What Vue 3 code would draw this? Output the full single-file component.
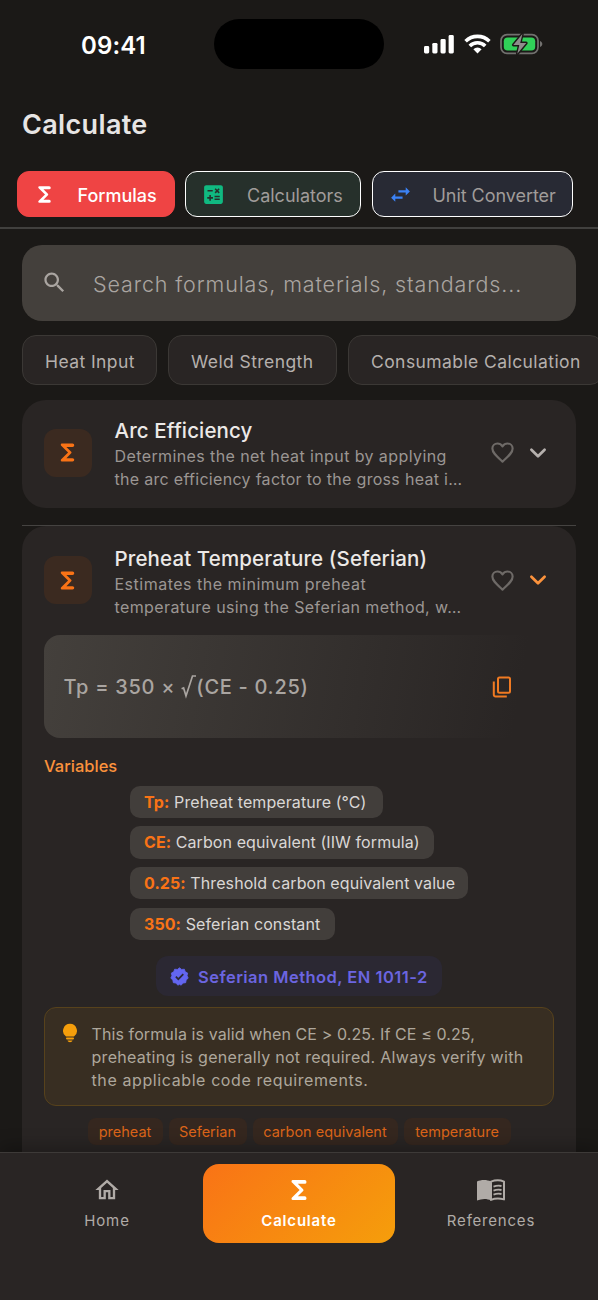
<template>
  <div class="screen">
    <!-- Status bar -->
    <div class="status-bar">
      <span class="clock">09:41</span>
      <div class="island"></div>
      <div class="status-icons">
        <svg width="31" height="20" viewBox="0 0 31 20" fill="#fff">
          <rect x="0" y="12" width="5.2" height="7.4" rx="1.4" />
          <rect x="8.3" y="8.9" width="5.2" height="10.5" rx="1.4" />
          <rect x="16.5" y="5" width="5.2" height="14.4" rx="1.4" />
          <rect x="24.6" y="1" width="5.2" height="18.4" rx="1.4" />
        </svg>
        <svg class="wifi" width="27" height="20" viewBox="0 0 27 20" fill="none" stroke="#fff" stroke-width="3.6">
          <path d="M1.6 7.2a17 17 0 0 1 23.8 0" />
          <path d="M5.8 12a10.8 10.8 0 0 1 15.4 0" />
          <path d="M13.5 19.4l-4.100-4.200a5.900 5.900 0 0 1 8.200 0z" fill="#fff" stroke="none" />
        </svg>
        <svg class="battery" width="43" height="24" viewBox="0 0 43 24">
          <rect x="1" y="2.7" width="37" height="18.600" rx="6" fill="none" stroke="#72716f" stroke-width="1.7" />
          <rect x="3.8" y="5.5" width="31.400" height="13" rx="3.8" fill="#30d158" />
          <path d="M40 9v6c1.4-.5 2.3-1.6 2.3-3s-.9-2.5-2.3-3z" fill="#72716f" />
          <path d="M22.400 2L13.300 13h6l-2 8.800L26.300 11h-6.100z" fill="#8f8d8c" stroke="#1c1917" stroke-width="2.8" paint-order="stroke" stroke-linejoin="round" />
        </svg>
      </div>
    </div>

    <h1 class="page-title">Calculate</h1>

    <!-- Section tabs -->
    <div class="tabs">
      <button v-for="tab in tabs" :key="tab.id" :class="['tab', 'tab-' + tab.id]">
        <svg class="tab-icon" viewBox="0 0 24 24" fill="currentColor"><path :d="icons[tab.icon]" /></svg>
        <span>{{ tab.label }}</span>
      </button>
    </div>

    <main class="content">
      <div class="search-box">
        <svg viewBox="0 0 24 24" width="27" height="27" fill="currentColor"><path :d="icons.search" /></svg>
        <span>Search formulas, materials, standards...</span>
      </div>

      <div class="filters">
        <button v-for="f in filters" :key="f.id" :class="['filter', f.id]">{{ f.label }}</button>
      </div>

      <!-- Formula cards -->
      <template v-for="item in formulas" :key="item.id">
        <div v-if="item.open" class="separator"></div>
        <section :class="['card', { open: item.open }]">
          <div class="card-header">
            <div class="card-icon">
              <svg viewBox="0 0 24 24" width="27" height="27" fill="currentColor"><path :d="icons.sigma" /></svg>
            </div>
            <div class="card-text">
              <h2>{{ item.title }}</h2>
              <p v-for="(line, i) in item.lines" :key="i" :class="item.id + '-' + i">{{ line }}</p>
            </div>
            <svg class="heart" viewBox="0 0 24 24" width="27" height="27" fill="none" stroke="currentColor" stroke-width="1.9" stroke-linejoin="round">
              <path d="M12 20.1l-1.3-1.2C6 14.7 3 12 3 8.5A4.5 4.5 0 0 1 7.5 4c1.8 0 3.4.9 4.5 2.5C13.1 4.9 14.7 4 16.5 4A4.5 4.5 0 0 1 21 8.5c0 3.5-3 6.2-7.7 10.4z" />
            </svg>
            <svg class="chevron" viewBox="0 0 18 12" width="18" height="12" fill="none" stroke="currentColor" stroke-width="2.7" stroke-linecap="round" stroke-linejoin="round">
              <path d="M2.4 2.7L9 9.300l6.600-6.600" />
            </svg>
          </div>

          <template v-if="item.open">
            <div class="formula">
              <span class="formula-text">Tp = 350 × <svg width="15" height="25" viewBox="0 0 15 25" fill="none" stroke="currentColor" stroke-width="1.7"><path d="M.6 14.8l2-.9 2.4 8L11.5 2H15" /></svg>(CE - 0.25)</span>
              <svg class="copy" width="20" height="22" viewBox="0 0 20 22" fill="none" stroke="currentColor" stroke-width="2">
                <rect x="6" y="1.5" width="12" height="15.2" rx="1.5" />
                <path d="M1.8 5.5v13.3a1.7 1.7 0 0 0 1.7 1.7h11.3" />
              </svg>
            </div>

            <h3 class="variables-title">Variables</h3>
            <ul class="variables">
              <li v-for="v in variables" :key="v.symbol" :class="v.id"><b>{{ v.symbol }}:</b> {{ v.text }}</li>
            </ul>

            <div class="standard">
              <svg viewBox="0 0 24 24" width="19" height="19">
                <path d="M12 1l2.7 2.1 3.4-.3 1.2 3.2 3 1.7-.7 3.3 1.4 3.1-2.6 2.3-.6 3.4-3.4.5L14.1 23 12 21.8 9.9 23l-2.3-2.7-3.4-.5-.6-3.4L1 14.1 2.4 11l-.7-3.3 3-1.7 1.2-3.2 3.4.3z" fill="#6366f1" stroke="#6366f1" stroke-linejoin="round" />
                <path d="M7.4 12.3l3.1 3.1 6.3-6.3" fill="none" stroke="#2c2936" stroke-width="2.2" />
              </svg>
              <span>Seferian Method, EN 1011-2</span>
            </div>

            <div class="note">
              <svg width="16" height="20" viewBox="0 0 16 20" fill="#f59e0b">
                <path d="M8 .8a7 7 0 0 0-4 12.7h8A7 7 0 0 0 8 .8z" />
                <rect x="4" y="14.6" width="8" height="1.8" rx=".8" />
                <path d="M5.5 17.6h5c-.4 1-1.3 1.7-2.5 1.7s-2.1-.7-2.5-1.7z" />
              </svg>
              <div>
                <p class="note-1">This formula is valid when CE &gt; 0.25. If CE ≤ 0.25,</p>
                <p class="note-2">preheating is generally not required. Always verify with</p>
                <p class="note-3">the applicable code requirements.</p>
              </div>
            </div>

            <div class="tags">
              <span v-for="tag in tags" :key="tag.id" :class="tag.id">{{ tag.label }}</span>
            </div>
          </template>
        </section>
      </template>
    </main>

    <!-- Bottom navigation -->
    <nav class="bottom-nav">
      <a class="nav-item home">
        <svg viewBox="0 0 24 24" width="28" height="28" fill="currentColor"><path :d="icons.home" /></svg>
        <span>Home</span>
      </a>
      <a class="nav-item active">
        <svg viewBox="0 0 24 24" width="30" height="30" fill="currentColor"><path :d="icons.sigma" /></svg>
        <span>Calculate</span>
      </a>
      <a class="nav-item references">
        <svg viewBox="0 0 30 24" width="30" height="24">
          <path d="M1 3.6C5 1.6 11 1.6 15 3.6V22.600c-4-2-9-2-14 0z" fill="currentColor" />
          <path d="M15 3.600c4-1.500 9.500-1.500 13 0v17.800c-4.500-1.200-9-1.200-13 .5z" fill="none" stroke="currentColor" stroke-width="2" stroke-linejoin="round" />
          <path d="M17.500 8.700c2.500-1 5.500-1.200 8-.7M17.500 12.700c2.500-1 5.500-1.200 8-.7M17.500 16.700c2.500-1 5.500-1.200 8-.7" fill="none" stroke="currentColor" stroke-width="1.8" />
        </svg>
        <span>References</span>
      </a>
    </nav>
  </div>
</template>

<script setup>
const icons = {
  sigma: 'M16.5 4H7.1A1.1 1.1 0 0 0 6 5.1c0 .4.15.7.4.95L12.5 12l-6.1 5.95c-.25.25-.4.55-.4.95A1.1 1.1 0 0 0 7.1 20h9.4a1.5 1.5 0 0 0 0-3H11l4.3-4.3a1 1 0 0 0 0-1.4L11 7h5.5a1.5 1.5 0 0 0 0-3z',
  calculator: 'M19 3H5c-1.1 0-2 .9-2 2v14c0 1.1.9 2 2 2h14c1.1 0 2-.9 2-2V5c0-1.1-.9-2-2-2zm-5.97 4.06L14.09 6l1.41 1.41L16.91 6l1.06 1.06-1.41 1.41 1.41 1.41-1.06 1.06-1.41-1.4-1.41 1.41-1.06-1.06 1.41-1.41-1.41-1.42zm-6.78.66h5v1.5h-5v-1.5zM11.5 16h-2v2H8v-2H6v-1.5h2v-2h1.5v2h2V16zm6.5 1.25h-5v-1.5h5v1.5zm0-2.5h-5v-1.5h5v1.5z',
  swap: 'M6.99 11L3 15l3.99 4v-3H14v-2H6.99v-3zM21 9l-3.99-4v3H10v2h7.01v3L21 9z',
  search: 'M15.5 14h-.79l-.28-.27C15.41 12.59 16 11.11 16 9.5 16 5.91 13.09 3 9.5 3S3 5.91 3 9.5 5.91 16 9.5 16c1.61 0 3.09-.59 4.23-1.57l.27.28v.79l5 4.99L20.49 19l-4.99-5zm-6 0C7.01 14 5 11.99 5 9.5S7.01 5 9.5 5 14 7.01 14 9.5 11.99 14 9.5 14z',
  home: 'M12 5.69l5 4.5V18h-2v-6H9v6H7v-7.81l5-4.5M12 3L2 12h3v8h6v-6h2v6h6v-8h3L12 3z'
}

const tabs = [
  { id: 'formulas', label: 'Formulas', icon: 'sigma' },
  { id: 'calculators', label: 'Calculators', icon: 'calculator' },
  { id: 'converter', label: 'Unit Converter', icon: 'swap' }
]

const filters = [
  { id: 'heat', label: 'Heat Input' },
  { id: 'strength', label: 'Weld Strength' },
  { id: 'consumable', label: 'Consumable Calculation' }
]

const formulas = [
  {
    id: 'arc',
    title: 'Arc Efficiency',
    lines: ['Determines the net heat input by applying', 'the arc efficiency factor to the gross heat i…'],
    open: false
  },
  {
    id: 'preheat',
    title: 'Preheat Temperature (Seferian)',
    lines: ['Estimates the minimum preheat', 'temperature using the Seferian method, w…'],
    open: true
  }
]

const variables = [
  { id: 'var-tp', symbol: 'Tp', text: 'Preheat temperature (°C)' },
  { id: 'var-ce', symbol: 'CE', text: 'Carbon equivalent (IIW formula)' },
  { id: 'var-threshold', symbol: '0.25', text: 'Threshold carbon equivalent value' },
  { id: 'var-constant', symbol: '350', text: 'Seferian constant' }
]

const tags = [
  { id: 'tag-preheat', label: 'preheat' },
  { id: 'tag-seferian', label: 'Seferian' },
  { id: 'tag-carbon', label: 'carbon equivalent' },
  { id: 'tag-temperature', label: 'temperature' }
]
</script>

<style>
body {
  margin: 0;
  background: #1b1917;
}
</style>

<style scoped>
.screen {
  width: 598px;
  height: 1300px;
  overflow: hidden;
  display: flex;
  flex-direction: column;
  background: #1b1917;
  color: #b0aba7;
  font-family: Inter, 'Liberation Sans', sans-serif;
  white-space: nowrap;
}

.screen * {
  box-sizing: border-box;
}

button {
  font: inherit;
  cursor: pointer;
}

h1, h2, h3, p, ul {
  margin: 0;
  padding: 0;
}

svg {
  display: block;
  flex-shrink: 0;
}

.status-bar {
  height: 88px;
  flex-shrink: 0;
  display: grid;
  grid-template-columns: 214px 170px 1fr;
  align-items: center;
}

.clock {
  padding: 2px 0 0 81px;
  font-size: 24px;
  font-weight: 600;
  color: #fff;
  letter-spacing: 0.1px;
}

.island {
  height: 50px;
  border-radius: 25px;
  background: #000;
}

.status-icons {
  display: flex;
  align-items: center;
  padding-left: 40px;
}

.wifi {
  margin-left: 9px;
}

.battery {
  margin-left: 9px;
}

.page-title {
  height: 83px;
  padding: 19px 22px 0;
  font-size: 27px;
  line-height: 36px;
  font-weight: 600;
  letter-spacing: 0.35px;
  color: #e7e5e4;
}

.tabs {
  height: 58px;
  flex-shrink: 0;
  display: flex;
  align-items: flex-start;
  gap: 10.5px;
  padding-left: 16.5px;
  border-bottom: 2px solid #41403e;
}

.tab {
  height: 45.5px;
  display: flex;
  align-items: center;
  padding: 4px 0 0 15px;
  border: 1.5px solid #fff;
  border-radius: 12px;
  font-size: 18px;
  color: #a09c9a;
  text-align: left;
}

.tab-icon {
  width: 25px;
  height: 25px;
  margin: -3px 20px 0 0;
}

.tab-formulas {
  width: 158px;
  background: #ef4444;
  border-color: #ef4444;
  color: #fff;
  font-weight: 500;
}

.tab-formulas .tab-icon {
  margin: -3px 21px 0 -1px;
}

.tab-calculators {
  width: 176px;
  background: #26302b;
}

.tab-calculators .tab-icon {
  margin-right: 21px;
  color: #10b981;
}

.tab-converter {
  width: 201.5px;
  background: #282a34;
  letter-spacing: -0.05px;
}

.tab-converter .tab-icon {
  color: #3b82f6;
}

.content {
  flex: 1;
  min-height: 0;
  overflow: hidden;
  padding: 16px 0 0 22px;
  width: 598px;
}

.search-box {
  width: 554px;
  height: 76px;
  border-radius: 20px;
  background: #44403c;
  display: flex;
  align-items: center;
  padding: 2px 0 0 19px;
  color: #aaa5a1;
  font-size: 21.5px;
  font-weight: 300;
  letter-spacing: 0.88px;
}

.search-box svg {
  margin: -4px 25px 0 0;
}

.filters {
  display: flex;
  gap: 11px;
  margin-top: 14px;
  height: 50px;
}

.filter {
  flex-shrink: 0;
  padding: 2px 0 0 22px;
  text-align: left;
  border: 1.5px solid #3b3835;
  border-radius: 14px;
  background: #292524;
  color: #b5b0ad;
  font-size: 17.5px;
  letter-spacing: 0.42px;
}

.heat {
  width: 135px;
}

.strength {
  width: 169px;
}

.consumable {
  width: 256px;
}

.card {
  width: 554px;
  height: 108px;
  margin-top: 15px;
  padding: 0 22px;
  border-radius: 24px;
  background: #292524;
}

.card.open {
  height: 700px;
  margin-top: 0;
}

.separator {
  width: 554px;
  height: 1px;
  margin-top: 17px;
  background: #454341;
}

.card-header {
  height: 105px;
  display: flex;
  align-items: center;
}

.open .card-header {
  height: 108px;
}

.card-icon {
  width: 48px;
  height: 48px;
  display: flex;
  align-items: center;
  justify-content: center;
  border-radius: 12px;
  background: #3b2a20;
  color: #f97316;
}

.card-icon svg {
  margin-left: -1px;
}

.card-text {
  width: 397px;
  padding: 3px 0 0 22.5px;
}

.open .card-text {
  padding-top: 4px;
}

.card-text h2 {
  font-size: 20.5px;
  font-weight: 500;
  line-height: 28px;
  letter-spacing: 0.12px;
  color: #ece9e7;
}

.card-text p {
  font-size: 16px;
  line-height: 23px;
  color: #9b9693;
}

.card-text .arc-0 {
  letter-spacing: 0.4px;
}

.card-text .arc-1 {
  letter-spacing: 0.3px;
}

.card-text .preheat-0 {
  letter-spacing: 0.5px;
}

.card-text .preheat-1 {
  letter-spacing: 0.4px;
}

.heart {
  color: #6e6a67;
}

.chevron {
  margin-left: 13px;
  color: #b5b0ad;
}

.open .chevron {
  color: #fb923c;
}

.formula {
  height: 103px;
  margin-top: 1px;
  display: flex;
  align-items: center;
  justify-content: space-between;
  padding: 0 42px 0 19.5px;
  border-radius: 16px;
  background: linear-gradient(100deg, #44403c, #292524 92%);
}

.formula-text {
  font-size: 20px;
  font-weight: 500;
  letter-spacing: 0.7px;
  color: #aaa5a1;
}

.formula-text svg {
  display: inline-block;
  vertical-align: -5px;
}

.copy {
  color: #f07a22;
}

.variables-title {
  margin-top: 17px;
  font-size: 16.5px;
  line-height: 22px;
  font-weight: 500;
  color: #fb923c;
}

.variables {
  display: flex;
  flex-direction: column;
  align-items: flex-start;
  gap: 8.5px;
  margin: 8.5px 0 0 86px;
  list-style: none;
}

.variables li {
  height: 32.3px;
  padding: 0 0 0 14px;
  border-radius: 10px;
  background: #423e3b;
  color: #dad7d5;
  font-size: 16px;
  line-height: 32.5px;
  letter-spacing: 0.09px;
}

.variables b {
  font-weight: 700;
  color: #f97316;
}

.var-tp {
  width: 252.5px;
}

.var-ce {
  width: 303.5px;
}

.var-threshold {
  width: 338px;
}

.var-constant {
  width: 205px;
}

.standard {
  width: 286px;
  height: 40px;
  margin: 15.5px auto 0;
  display: flex;
  align-items: center;
  gap: 9px;
  padding: 2px 0 0 14px;
  border-radius: 12px;
  background: #2b2833;
  color: #6b65e0;
  font-size: 16.5px;
  font-weight: 600;
  letter-spacing: 0.47px;
}

.note {
  height: 99px;
  margin-top: 11px;
  display: flex;
  gap: 13.5px;
  padding: 15px 0 0 17px;
  border: 1.5px solid #57421c;
  border-radius: 12px;
  background: #382e22;
  color: #aea79c;
}

.note p {
  font-size: 16px;
  line-height: 23.2px;
}

.note-1 {
  letter-spacing: 0.1px;
}

.note-2 {
  letter-spacing: 0.29px;
}

.note-3 {
  letter-spacing: 0.6px;
}

.tags {
  display: flex;
  justify-content: center;
  gap: 6px;
  margin-top: 12px;
}

.tags span {
  height: 27.5px;
  border-radius: 8px;
  background: #35271f;
  color: #dc6519;
  font-size: 14.5px;
  line-height: 28px;
  text-align: center;
}

.tag-preheat {
  width: 75px;
}

.tag-seferian {
  width: 78px;
}

.tag-carbon {
  width: 145px;
}

.tag-temperature {
  width: 107px;
}

.bottom-nav {
  height: 148px;
  flex-shrink: 0;
  position: relative;
  display: flex;
  align-items: flex-start;
  padding: 11px 11px 0;
  border-top: 1px solid #3d3a38;
  background: #292524;
  box-shadow: 0 -6px 16px rgba(0, 0, 0, 0.25);
}

.nav-item {
  flex: 1;
  height: 78.5px;
  display: flex;
  flex-direction: column;
  align-items: center;
  border-radius: 16px;
  font-size: 15px;
  letter-spacing: 0.8px;
}

.nav-item svg {
  height: 30px;
  margin-top: 11px;
}

.nav-item span {
  margin-top: 6px;
  line-height: 20px;
}

.home span {
  letter-spacing: 0.9px;
}

.nav-item.active {
  background: linear-gradient(135deg, #f97316, #f59e0b);
  color: #fff;
  font-weight: 600;
}
</style>
